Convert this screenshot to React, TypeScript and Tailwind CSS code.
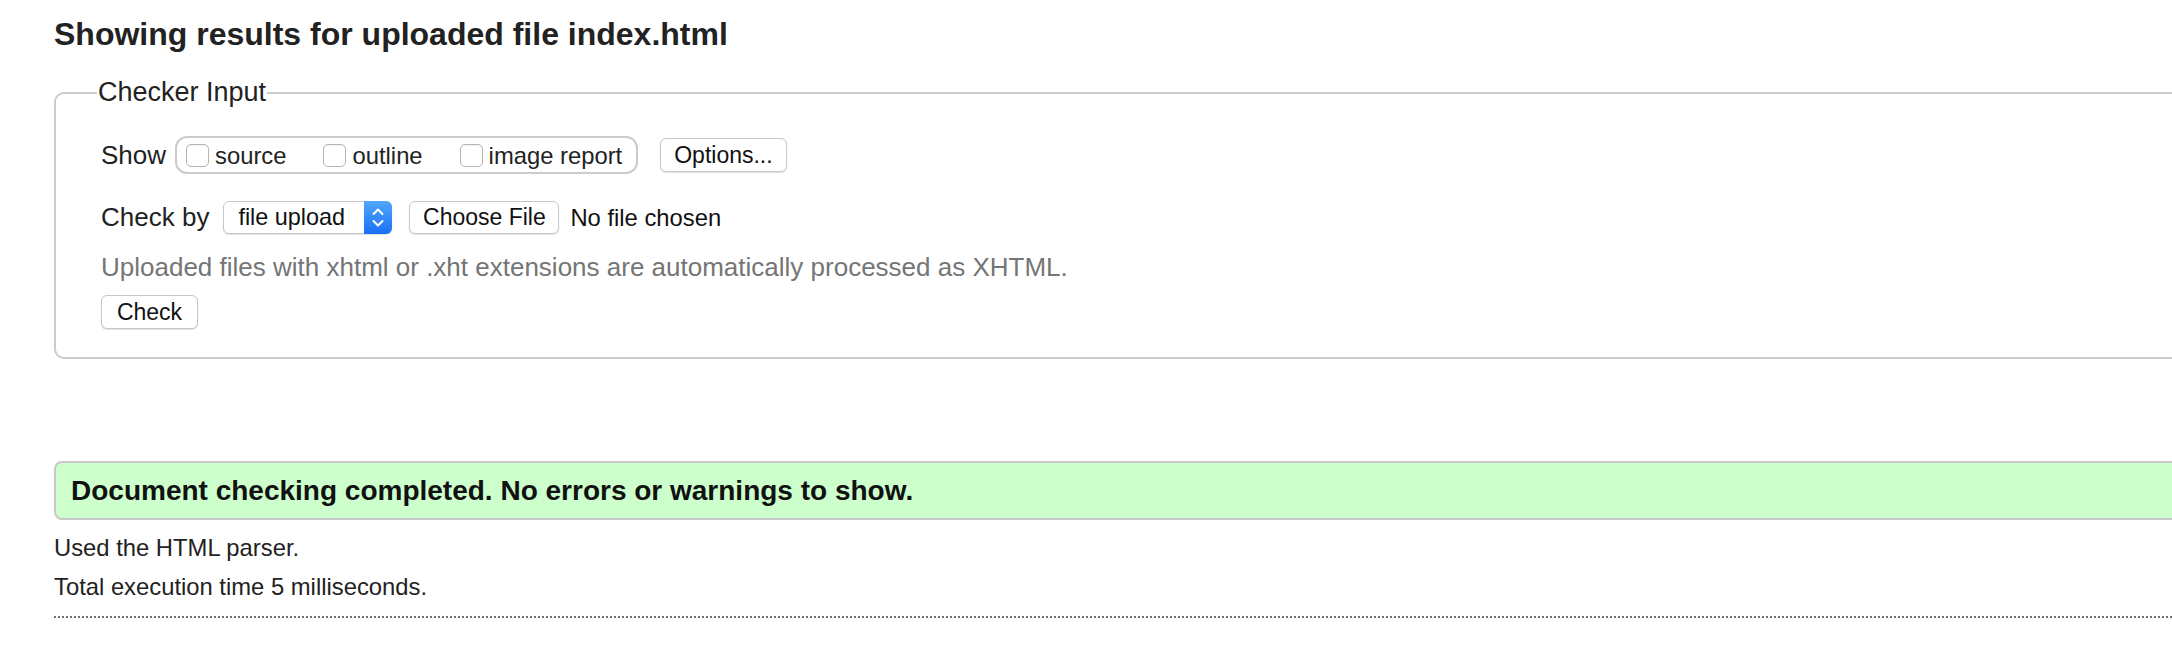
import React from "react";

const Checkbox = ({ label }: { label: string }) => (
  <label className="flex items-center">
    <input
      type="checkbox"
      className="appearance-none w-[23px] h-[23px] rounded-[5px] border border-[#b4b4b4] bg-white shadow-[inset_0_1px_1px_rgba(0,0,0,0.06)]"
    />
    <span className="ml-[6px] text-[23.8px] leading-[27px] text-[#222]">{label}</span>
  </label>
);

const MacButton = ({ children, className = "" }: { children: React.ReactNode; className?: string }) => (
  <button
    type="button"
    className={`flex items-center justify-center bg-white border border-[#c7c7c7] rounded-[6px] shadow-[0_1px_1px_rgba(0,0,0,0.12)] text-[23px] leading-[27px] text-[#111] ${className}`}
  >
    {children}
  </button>
);

export default function App() {
  return (
    <div className="w-full min-h-screen overflow-hidden bg-white font-['Liberation_Sans',Arial,sans-serif] text-[#222]">
      <div className="pl-[54px]">
        <h2 className="pt-[16px] text-[32px] leading-[37px] font-bold text-[#222]">
          Showing results for uploaded file index.html
        </h2>

        {/* Checker form */}
        <fieldset className="mt-[24px] -mr-[40px] border-2 border-[#cbcbcb] rounded-[10px] pl-[45px] pb-[28px]">
          <legend className="-ml-[4px] px-[1px] text-[27px] leading-[31px] text-[#222]">Checker Input</legend>

          <div className="mt-[28px] flex items-center h-[38px]">
            <span className="mr-[8.5px] text-[26px] leading-[30px]">Show</span>
            <div className="h-[38px] flex items-center gap-[37px] border-2 border-[#cbcbcb] rounded-[12px] pl-[9.5px] pr-[14px]">
              <Checkbox label="source" />
              <Checkbox label="outline" />
              <Checkbox label="image report" />
            </div>
            <MacButton className="ml-[22px] h-[34px] px-[13px]">Options...</MacButton>
          </div>

          <div className="mt-[26px] flex items-center h-[34px]">
            <span className="mr-[14px] text-[26px] leading-[30px]">Check by</span>
            <div className="flex w-[169px] h-[33px] bg-white border border-[#c7c7c7] rounded-[6px] shadow-[0_1px_1px_rgba(0,0,0,0.12)]">
              <span className="flex-1 flex items-center pl-[14px] text-[23.4px] leading-[27px] text-[#111]">file upload</span>
              <span className="w-[28px] -my-px -mr-px rounded-r-[6px] bg-gradient-to-b from-[#52a6fd] to-[#1670f3] flex items-center justify-center">
                <svg width="28" height="33" viewBox="0 0 28 33" fill="none" stroke="white" strokeWidth="2" strokeLinecap="round" strokeLinejoin="round">
                  <polyline points="9.5,13 14,8.5 18.5,13" />
                  <polyline points="9.5,20 14,24.5 18.5,20" />
                </svg>
              </span>
            </div>
            <MacButton className="ml-[17px] w-[150px] h-[33px]">Choose File</MacButton>
            <span className="ml-[11px] text-[23.8px] leading-[27px] text-[#111]">No file chosen</span>
          </div>

          <p className="mt-[18px] text-[26px] leading-[30px] text-[#757575]">
            Uploaded files with xhtml or .xht extensions are automatically processed as XHTML.
          </p>

          <MacButton className="mt-[13px] w-[97px] h-[34px]">Check</MacButton>
        </fieldset>

        {/* Result */}
        <div className="mt-[102px] -mr-[40px] h-[59px] flex items-center pl-[15px] bg-[#ccffcc] border-2 border-[#c8c8c8] rounded-[8px]">
          <p className="text-[28px] leading-[32px] font-bold text-[#111]">
            Document checking completed. No errors or warnings to show.
          </p>
        </div>

        <p className="mt-[14px] text-[23.8px] leading-[27px]">Used the HTML parser.</p>
        <p className="mt-[11.5px] text-[23.8px] leading-[27px]">Total execution time 5 milliseconds.</p>

        <div className="mt-[16px] -mr-[40px] border-t-2 border-dotted border-[#6f6f6f]" />
      </div>
    </div>
  );
}
